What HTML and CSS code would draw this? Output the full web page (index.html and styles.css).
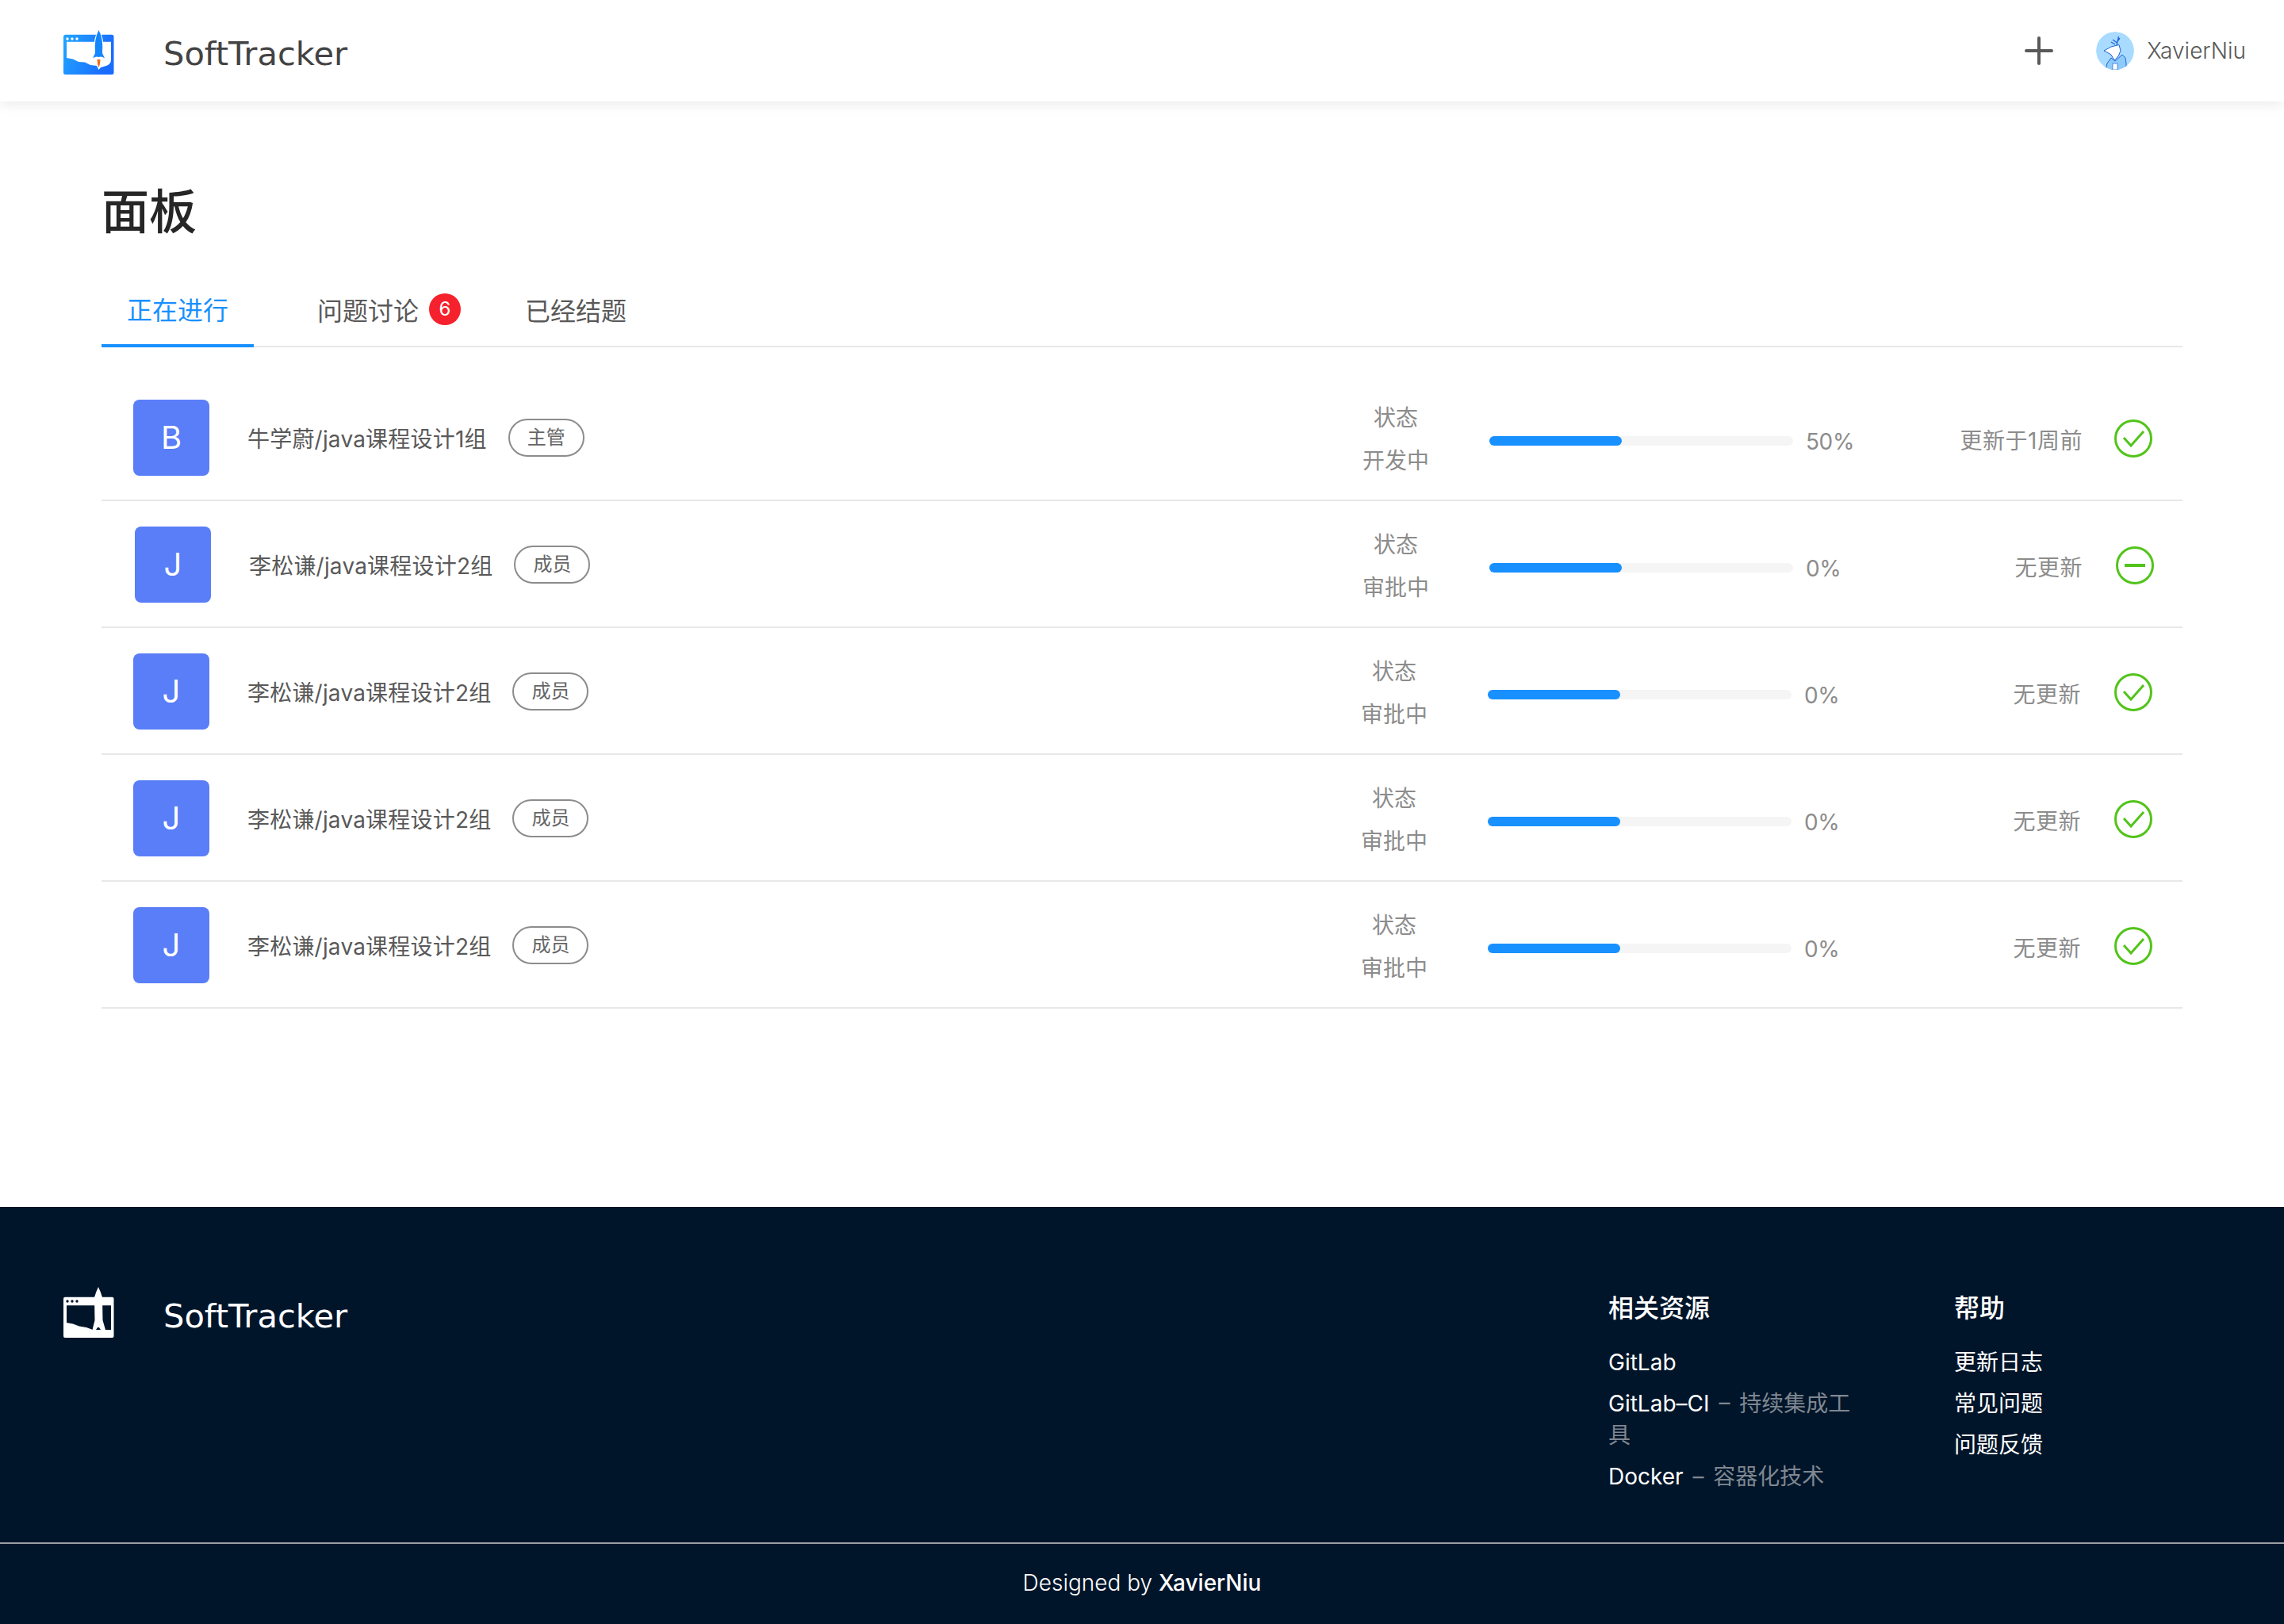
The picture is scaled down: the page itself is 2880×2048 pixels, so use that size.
FILE: index.html
```html
<!DOCTYPE html>
<html lang="zh-CN">
<head>
<meta charset="UTF-8">
<title>SoftTracker</title>
<link rel="stylesheet" href="styles.css">
</head>
<body>

<header class="topbar">
  <div class="brand">
    <svg class="logo" viewBox="0 0 64 60">
      <defs>
        <linearGradient id="logoBlue" x1="0" y1="0" x2="1" y2="0.3">
          <stop offset="0" stop-color="#22a6ff"/>
          <stop offset="1" stop-color="#1a6cff"/>
        </linearGradient>
      </defs>
      <rect x="0" y="6.700" width="63.500" height="50.300" rx="2.500" fill="url(#logoBlue)"/>
      <path d="M4 15.700H60V38Q60 44 54 46L47 48L44.500 51L42 46L34 45L27 41.500L19 41L12 37.500L4 36Z" fill="#fff"/>
      <circle cx="5" cy="12" r="1.700" fill="#fff"/>
      <circle cx="11" cy="12" r="1.700" fill="#fff"/>
      <circle cx="17" cy="12" r="1.700" fill="#fff"/>
      <path d="M44.500 -1Q52 12 50.500 30L54 38H35L38.500 30Q37 12 44.500 -1Z" fill="#fff"/>
      <path d="M44.500 1Q50.500 12 49 30L52 36.500Q48 33.500 44.500 35Q41 33.500 37 36.500L40 30Q38.500 12 44.500 1Z" fill="#1487ff"/>
      <path d="M42.500 38H46.500Q46.500 44 44.500 48Q42.500 44 42.500 38Z" fill="#f56a1b"/>
    </svg>
    <span class="brand-name">SoftTracker</span>
  </div>
  <div class="topbar-right">
    <svg class="plus" viewBox="0 0 36 36"><path d="M18 2V34M2 18H34"/></svg>
    <svg class="user-pic" viewBox="0 0 48 48">
      <circle cx="24" cy="24" r="24" fill="#a8dbff"/>
      <path d="M12 48L14 40L19 33L24 37L33 29L37 33L38 40L38 48Z" fill="#8fcbf8" stroke="#1f63d6"/>
      <path d="M10 24L19 19L29 16.500L31 24L28 31L23 36L19 29L15 26.500Z" fill="#fff" stroke="#1f63d6"/>
      <path d="M26 17L28.500 6M27.500 11.500L30 8M26.500 14L21 10M24 16L19 13" fill="none" stroke="#1f63d6" stroke-width="1.300"/>
      <rect x="21" y="40" width="6" height="8" fill="#fff" stroke="#1f63d6" stroke-width="0.700"/>
    </svg>
    <span class="user-name">XavierNiu</span>
  </div>
</header>

<main class="page">
  <h1 class="page-title">面板</h1>

  <nav class="tabs">
    <a class="tab active">正在进行</a>
    <a class="tab tab-badged">问题讨论<span class="badge">6</span></a>
    <a class="tab">已经结题</a>
  </nav>

  <ul class="projects">
    <li class="project">
      <div class="avatar">B</div>
      <span class="project-name">牛学蔚/java课程设计1组</span>
      <span class="role">主管</span>
      <div class="state"><span>状态</span><span>开发中</span></div>
      <div class="progress"><div class="progress-fill"></div></div>
      <span class="percent">50%</span>
      <span class="updated">更新于1周前</span>
      <svg class="check" viewBox="0 0 48 48"><circle cx="24" cy="24" r="22.500"/><path d="M12 23L21 33L37 15"/></svg>
    </li>
    <li class="project project-b">
      <div class="avatar">J</div>
      <span class="project-name">李松谦/java课程设计2组</span>
      <span class="role">成员</span>
      <div class="state"><span>状态</span><span>审批中</span></div>
      <div class="progress"><div class="progress-fill"></div></div>
      <span class="percent">0%</span>
      <span class="updated">无更新</span>
      <svg class="check" viewBox="0 0 48 48"><circle cx="24" cy="24" r="22.500"/><path class="minus" d="M11 24H37"/></svg>
    </li>
    <li class="project project-c">
      <div class="avatar">J</div>
      <span class="project-name">李松谦/java课程设计2组</span>
      <span class="role">成员</span>
      <div class="state"><span>状态</span><span>审批中</span></div>
      <div class="progress"><div class="progress-fill"></div></div>
      <span class="percent">0%</span>
      <span class="updated">无更新</span>
      <svg class="check" viewBox="0 0 48 48"><circle cx="24" cy="24" r="22.500"/><path d="M12 23L21 33L37 15"/></svg>
    </li>
    <li class="project project-c">
      <div class="avatar">J</div>
      <span class="project-name">李松谦/java课程设计2组</span>
      <span class="role">成员</span>
      <div class="state"><span>状态</span><span>审批中</span></div>
      <div class="progress"><div class="progress-fill"></div></div>
      <span class="percent">0%</span>
      <span class="updated">无更新</span>
      <svg class="check" viewBox="0 0 48 48"><circle cx="24" cy="24" r="22.500"/><path d="M12 23L21 33L37 15"/></svg>
    </li>
    <li class="project project-c">
      <div class="avatar">J</div>
      <span class="project-name">李松谦/java课程设计2组</span>
      <span class="role">成员</span>
      <div class="state"><span>状态</span><span>审批中</span></div>
      <div class="progress"><div class="progress-fill"></div></div>
      <span class="percent">0%</span>
      <span class="updated">无更新</span>
      <svg class="check" viewBox="0 0 48 48"><circle cx="24" cy="24" r="22.500"/><path d="M12 23L21 33L37 15"/></svg>
    </li>
  </ul>
</main>

<footer class="footer">
  <div class="footer-top">
    <div class="brand footer-brand">
      <svg class="logo logo-white" viewBox="0 0 64 64">
        <rect x="0" y="12.700" width="63.500" height="51.300" rx="2" fill="#fff"/>
        <path d="M4 23.300H60V54H4Z" fill="#00152a"/>
        <path d="M4 45L12 46.500L20 49.500L29 51L37 54V56H4Z" fill="#fff"/>
        <circle cx="5" cy="18" r="1.700" fill="#00152a"/>
        <circle cx="11" cy="18" r="1.700" fill="#00152a"/>
        <circle cx="17" cy="18" r="1.700" fill="#00152a"/>
        <path d="M44 0Q47 6 49 13L49.500 42L53 54H47L45 51H43L41 54H36.500L39.500 42L39 13Q41 6 44 0Z" fill="#fff"/>
      </svg>
      <span class="brand-name">SoftTracker</span>
    </div>
    <div class="footer-links">
      <div class="footer-col footer-col-wide">
        <h4>相关资源</h4>
        <a>GitLab</a>
        <a>GitLab–CI <em>– 持续集成工具</em></a>
        <a>Docker <em>– 容器化技术</em></a>
      </div>
      <div class="footer-col">
        <h4>帮助</h4>
        <a>更新日志</a>
        <a>常见问题</a>
        <a>问题反馈</a>
      </div>
    </div>
  </div>
  <div class="footer-bottom">Designed by <b>XavierNiu</b></div>
</footer>

</body>
</html>
```

FILE: styles.css
```css
* {
  box-sizing: border-box;
}
body {
  margin: 0;
  font-family: Inter, "Noto Sans CJK SC", sans-serif;
  background-color: #fff;
  color: #595959;
}
.topbar {
  height: 128px;
  padding: 0 48px 0 80px;
  display: flex;
  align-items: center;
  justify-content: space-between;
  background-color: #fff;
  box-shadow: 0 4px 16px rgba(0, 0, 0, 0.08);
}
.brand {
  display: flex;
  align-items: center;
  margin-top: 6px;
}
.logo {
  width: 64px;
  height: 60px;
  overflow: visible;
}
.brand-name {
  margin-left: 62px;
  font-family: "DejaVu Sans", sans-serif;
  font-size: 41.600px;
  color: #434343;
}
.topbar-right {
  display: flex;
  align-items: center;
}
.plus {
  width: 36px;
  height: 36px;
  margin-right: 54px;
}
.plus path {
  fill: none;
  stroke: #595959;
  stroke-width: 4;
  stroke-linecap: round;
}
.user-pic {
  width: 48px;
  height: 48px;
  margin-right: 16px;
  border-radius: 50%;
  overflow: hidden;
}
.user-name {
  font-size: 28px;
  font-weight: 300;
  color: #595959;
}

.page {
  height: 1394px;
  padding: 97px 128px 0;
}
.page-title {
  margin: 0 0 33px;
  font-size: 60px;
  line-height: 84px;
  font-weight: 500;
  color: #262626;
}
.tabs {
  display: flex;
  gap: 48px;
  height: 96px;
  border-bottom: 2px solid #e8e8e8;
}
.tab {
  height: 96px;
  padding: 0 32px;
  display: flex;
  align-items: center;
  font-size: 32px;
  color: #595959;
}
.tab.active {
  padding-top: 2px;
  color: #1890ff;
  border-bottom: 4px solid #1890ff;
}
.tab-badged {
  padding-right: 1px;
}
.badge {
  width: 40px;
  height: 40px;
  margin-left: 13px;
  border-radius: 50%;
  background-color: #f5222d;
  color: #fff;
  font-size: 24px;
  text-align: center;
  line-height: 40px;
}

.projects {
  list-style-type: none;
  margin: 34px 0 0;
  padding: 0;
}
.project {
  height: 160px;
  padding: 2px 38px 0 40px;
  display: flex;
  align-items: center;
  border-bottom: 2px solid #e8e8e8;
}
.avatar {
  width: 96px;
  height: 96px;
  border-radius: 8px;
  background-color: #597ef7;
  color: #fff;
  font-size: 40px;
  text-align: center;
  line-height: 96px;
}
.project-name {
  margin-left: 48px;
  font-size: 28px;
  letter-spacing: 0.2px;
  color: #595959;
}
.role {
  height: 48px;
  margin-left: 27px;
  padding: 0 22px;
  border: 2px solid #8c8c8c;
  border-radius: 24px;
  font-size: 24px;
  line-height: 44px;
  color: #666;
}
.state {
  width: 120px;
  margin-top: 3px;
  margin-left: auto;
  display: flex;
  flex-direction: column;
  gap: 14px;
  align-items: center;
  font-size: 28px;
  line-height: 40px;
  color: #8c8c8c;
}
.progress {
  width: 383px;
  height: 12px;
  margin-top: 8px;
  margin-left: 58px;
  border-radius: 6px;
  background-color: #f5f5f5;
}
.progress-fill {
  width: 167px;
  height: 12px;
  border-radius: 6px;
  background-color: #1890ff;
}
.percent {
  width: 122px;
  margin-top: 10px;
  margin-left: 16px;
  font-size: 28px;
  letter-spacing: -0.4px;
  color: #8c8c8c;
}
.updated {
  width: 227px;
  margin-top: 4px;
  text-align: right;
  font-size: 28px;
  letter-spacing: 0.5px;
  color: #8c8c8c;
}
.check {
  width: 48px;
  height: 48px;
  margin-top: 2px;
  margin-left: 40px;
  fill: none;
  stroke: #52c41a;
  stroke-width: 3;
}
.check .minus {
  stroke-width: 4;
}
.project-b {
  padding: 2px 36px 0 42px;
}
.project-b .check {
  margin-left: 42px;
}
.project-c .updated {
  margin-right: 2px;
}

.footer {
  height: 526px;
  background-color: #00152a;
  color: #fff;
}
.footer-top {
  height: 423px;
  padding: 0 0 0 80px;
  display: flex;
  justify-content: space-between;
  align-items: flex-start;
}
.footer-brand {
  margin-top: 101px;
}
.logo-white {
  height: 64px;
}
.footer-brand .brand-name {
  margin-top: 8px;
  color: #fff;
}
.footer-links {
  display: flex;
  padding-top: 106px;
}
.footer-col {
  width: 416px;
  display: flex;
  flex-direction: column;
  align-items: flex-start;
  font-size: 28px;
  line-height: 40px;
}
.footer-col-wide {
  width: 436px;
  padding-right: 120px;
}
.footer-col h4 {
  margin: 0 0 26px;
  font-size: 32px;
  line-height: 44px;
  font-weight: 500;
}
.footer-col a {
  margin-bottom: 12px;
  word-spacing: 4px;
  color: #fff;
}
.footer-col em {
  font-style: normal;
  color: #7f8791;
}
.footer-bottom {
  height: 103px;
  border-top: 2px solid #9a9fa5;
  text-align: center;
  font-size: 28px;
  font-weight: 300;
  line-height: 98px;
  color: #fff;
}
.footer-bottom b {
  font-weight: 500;
}
```
